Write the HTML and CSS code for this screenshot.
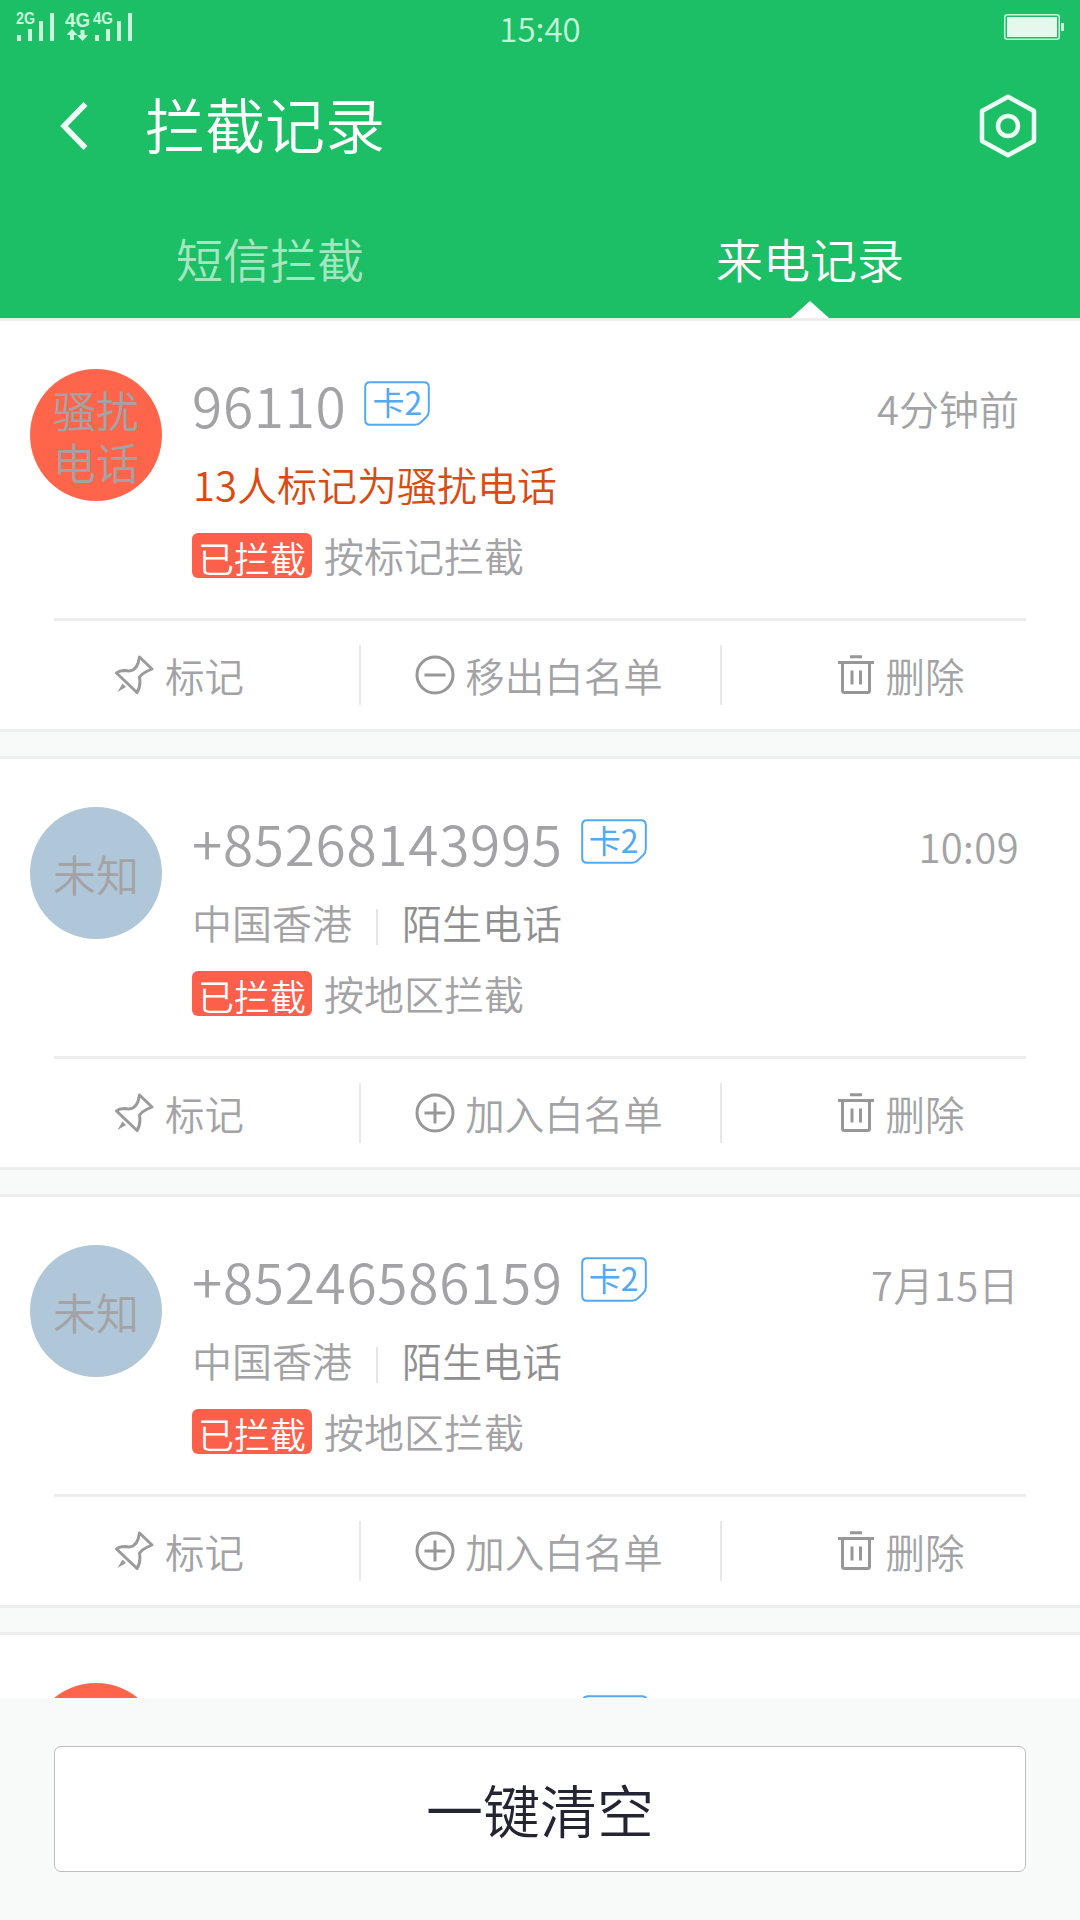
FILE: index.html
```html
<!DOCTYPE html>
<html lang="zh-CN">
<head>
<meta charset="utf-8">
<title>拦截记录</title>
<link rel="stylesheet" href="styles.css">
</head>
<body>
<svg class="defs" width="0" height="0">
  <symbol id="pin" viewBox="0 0 40 40"><path d="M24.5 2 37 14l-5.500 2.500q-5 2.500-7 5.500 1.500 10-2.500 15.500L1.500 18q2.500-2.500 8.500-2.500 5 1 8-.5 4-3 5-6.500Z" fill="none" stroke="#9b9b9b" stroke-width="3" stroke-linejoin="round"/><path d="M2.500 37 7.500 28.500 11 32Z" fill="#9b9b9b"/></symbol>
  <symbol id="minus" viewBox="0 0 40 40"><g fill="none" stroke="#979797" stroke-width="3"><circle cx="20" cy="20" r="18"/><path d="M9.500 20h21"/></g></symbol>
  <symbol id="plus" viewBox="0 0 40 40"><g fill="none" stroke="#979797" stroke-width="3"><circle cx="20" cy="20" r="18"/><path d="M9.500 20h21M20 9.500v21"/></g></symbol>
  <symbol id="trash" viewBox="0 0 36 40"><g fill="none" stroke="#979797" stroke-width="3"><path d="M12 1.700h12M0 7.500h36M4.500 7.500v28q0 2 2 2h23q2 0 2-2v-28M14 15.500v14M22.500 15.500v14"/></g></symbol>
  <symbol id="sim" viewBox="0 0 66 45"><path d="M6 1.200h54q4.800 0 4.800 4.800v24q0 3.500-2.500 6l-5.300 5.300q-2.500 2.500-6 2.500H6q-4.800 0-4.800-4.800V6q0-4.800 4.800-4.800Z" fill="#fff" stroke="#55a9f0" stroke-width="2"/></symbol>
</svg>
<div class="screen">
  <header class="header">
    <div class="status">
      <svg class="signal" width="120" height="32" viewBox="0 0 120 32" fill="#c8f7dc">
        <g class="net"><text x="0" y="14" font-size="16" textLength="19" lengthAdjust="spacingAndGlyphs">2G</text><text x="49" y="17" font-size="20" textLength="25" lengthAdjust="spacingAndGlyphs">4G</text><text x="77" y="14" font-size="16" textLength="20" lengthAdjust="spacingAndGlyphs">4G</text></g>
        <path d="M1 25h4v6H1zM12 19h4v12h-4zM23 11h4v20h-4zM34 3h4v28h-4zM79 25h4v6h-4zM90 19h4v12h-4zM101 11h4v20h-4zM112 3h4v28h-4z"/>
        <path d="M56 19l5.500 6H58v5h-4v-5h-3.500zM66.500 31l5.500-6h-3.500v-5h-4v5H61z"/>
      </svg>
      <span class="clock">15:40</span>
      <svg class="battery" width="60" height="26" viewBox="0 0 60 26"><rect x=".75" y=".75" width="54.500" height="24.500" rx="2.500" fill="none" stroke="#c8f7dc" stroke-width="1.500"/><path d="M3 3h50v20H3z" fill="#e6f8ed"/><path d="M57 9h3v8h-3z" fill="#c8f7dc"/></svg>
    </div>
    <div class="titlebar">
      <svg class="back" width="28" height="50" viewBox="0 0 28 50"><path d="M25.500 3 4 25l21.500 22" fill="none" stroke="#eefff5" stroke-width="5.500"/></svg>
      <h1 class="title">拦截记录</h1>
      <svg class="settings" width="58" height="64" viewBox="0 0 58 64"><g fill="none" stroke="#eefff5" stroke-width="4.500" stroke-linejoin="round"><path d="M29 2.800 55 17v30L29 61.200 3 47V17Z"/><circle cx="29" cy="32" r="10"/></g></svg>
    </div>
    <nav class="tabs">
      <span class="tab">短信拦截</span>
      <span class="tab active">来电记录</span>
    </nav>
  </header>

  <main class="list">
    <section class="card">
      <div class="record">
        <div class="avatar spam"><span>骚扰</span><span>电话</span></div>
        <div class="info">
          <div class="line1"><span class="number">96110</span><span class="sim"><svg class="simshape"><use href="#sim"/></svg><span class="simtext">卡2</span></span><span class="time">4分钟前</span></div>
          <div class="line2 warn">13人标记为骚扰电话</div>
          <div class="line3"><span class="blocked">已拦截</span><span class="reason">按标记拦截</span></div>
        </div>
      </div>
      <div class="actions">
        <span class="action"><svg class="icon"><use href="#pin"/></svg>标记</span>
        <span class="action"><svg class="icon"><use href="#minus"/></svg>移出白名单</span>
        <span class="action"><svg class="icon trash"><use href="#trash"/></svg>删除</span>
      </div>
    </section>

    <section class="card">
      <div class="record">
        <div class="avatar">未知</div>
        <div class="info">
          <div class="line1"><span class="number">+85268143995</span><span class="sim"><svg class="simshape"><use href="#sim"/></svg><span class="simtext">卡2</span></span><span class="time digits">10:09</span></div>
          <div class="line2"><span>中国香港</span><span class="kind">陌生电话</span></div>
          <div class="line3"><span class="blocked">已拦截</span><span class="reason">按地区拦截</span></div>
        </div>
      </div>
      <div class="actions">
        <span class="action"><svg class="icon"><use href="#pin"/></svg>标记</span>
        <span class="action"><svg class="icon"><use href="#plus"/></svg>加入白名单</span>
        <span class="action"><svg class="icon trash"><use href="#trash"/></svg>删除</span>
      </div>
    </section>

    <section class="card">
      <div class="record">
        <div class="avatar">未知</div>
        <div class="info">
          <div class="line1"><span class="number">+85246586159</span><span class="sim"><svg class="simshape"><use href="#sim"/></svg><span class="simtext">卡2</span></span><span class="time digits">7月15日</span></div>
          <div class="line2"><span>中国香港</span><span class="kind">陌生电话</span></div>
          <div class="line3"><span class="blocked">已拦截</span><span class="reason">按地区拦截</span></div>
        </div>
      </div>
      <div class="actions">
        <span class="action"><svg class="icon"><use href="#pin"/></svg>标记</span>
        <span class="action"><svg class="icon"><use href="#plus"/></svg>加入白名单</span>
        <span class="action"><svg class="icon trash"><use href="#trash"/></svg>删除</span>
      </div>
    </section>

    <section class="card">
      <div class="record">
        <div class="avatar spam"></div>
        <div class="info">
          <div class="line1"><span class="number blank"></span><span class="sim"><svg class="simshape"><use href="#sim"/></svg></span></div>
        </div>
      </div>
    </section>
  </main>

  <footer class="footer"><button class="clear">一键清空</button></footer>
</div>
</body>
</html>
```
FILE: styles.css
```css
* { box-sizing: border-box; }
body {
  margin: 0;
  font-family: "Noto Sans CJK SC", sans-serif;
  font-weight: 350;
  color: #a3a3a6;
}
.defs { position: absolute; }
.screen {
  width: 1080px;
  height: 1920px;
  display: flex;
  flex-direction: column;
  overflow: hidden;
  background: #f8faf9;
}
svg { display: block; flex: none; }

.header {
  flex: none;
  height: 318px;
  background: #1cbf65;
  color: #fff;
  display: flex;
  flex-direction: column;
}
.status {
  height: 58px;
  padding: 0 16px;
  display: grid;
  grid-template-columns: 1fr auto 1fr;
}
.signal { margin-top: 10px; }
.net { font-family: "Liberation Sans", sans-serif; font-weight: 700; }
.clock { font-size: 33px; line-height: 56px; color: #c4f5d9; }
.battery { justify-self: end; margin-top: 14px; }
.titlebar {
  height: 136px;
  padding: 0 43px 0 60px;
  display: flex;
  align-items: center;
}
.title {
  margin: 0 auto 0 57px;
  padding-bottom: 6px;
  font-size: 60px;
  line-height: 80px;
  font-weight: 350;
}
.tabs { flex: 1; display: flex; }
.tab {
  flex: 1;
  display: flex;
  flex-direction: column;
  align-items: center;
  justify-content: space-between;
  padding-top: 29px;
  font-size: 47px;
  line-height: 70px;
  color: #a4e6c2;
}
.tab.active { color: #fff; }
.tab.active::after {
  content: "";
  width: 38px;
  height: 17px;
  background: #fff;
  clip-path: polygon(50% 0, 100% 100%, 0 100%);
}

.list {
  height: 1380px;
  overflow: hidden;
  display: flex;
  flex-direction: column;
  gap: 24px;
}
.card {
  flex: none;
  height: 414px;
  background: #fff;
  border-top: 3px solid #ededed;
  border-bottom: 3px solid #ededed;
}
.record {
  height: 297px;
  padding: 48px 61px 0 30px;
  display: flex;
  gap: 30px;
}
.avatar {
  flex: none;
  width: 132px;
  height: 132px;
  border-radius: 50%;
  background: #b0c6d9;
  display: flex;
  flex-direction: column;
  align-items: center;
  justify-content: center;
  font-size: 43px;
  line-height: 52px;
}
.avatar.spam { background: #ff654b; }
.info { flex: 1; display: flex; flex-direction: column; }
.line1 { height: 72px; display: flex; }
.number { font-size: 55px; line-height: 70px; letter-spacing: .7px; }
.number.blank { width: 372px; }
.sim {
  position: relative;
  width: 66px;
  height: 45px;
  margin: 12px 0 0 18px;
  text-align: center;
}
.simshape { position: absolute; left: 0; top: 0; width: 66px; height: 45px; }
.simtext {
  position: relative;
  font-size: 32px;
  line-height: 40px;
  font-weight: 400;
  color: #55a9f0;
}
.time { margin-left: auto; font-size: 40px; line-height: 78px; }
.digits { letter-spacing: .4px; }
.line2 {
  height: 50px;
  margin-top: 18px;
  display: flex;
  align-items: center;
  font-size: 40px;
  line-height: 50px;
}
.warn { padding-left: 1px; color: #db4a10; }
.kind {
  margin-left: 24px;
  padding-left: 26px;
  color: #8f8f92;
  background: linear-gradient(#e6e6e6, #e6e6e6) 0 85% / 2px 36px no-repeat;
}
.line3 { margin-top: 24px; height: 45px; display: flex; align-items: center; }
.blocked {
  width: 120px;
  height: 45px;
  border-radius: 6px;
  background: #fc604a;
  color: #fff;
  font-size: 36px;
  line-height: 48px;
  text-align: center;
}
.reason { margin-left: 12px; font-size: 40px; line-height: 45px; }
.actions {
  height: 111px;
  display: grid;
  grid-template-columns: 359px 361px 360px;
  align-items: center;
  background: linear-gradient(#ededed, #ededed) 54px 0 / 972px 3px no-repeat;
  padding-top: 3px;
}
.action {
  height: 60px;
  display: flex;
  align-items: center;
  justify-content: center;
  gap: 10px;
  font-size: 39.500px;
  line-height: 60px;
}
.action + .action { border-left: 2px solid #e8e8e8; }
.action:nth-child(2) { padding-right: 3px; }
.icon { width: 40px; height: 40px; }
.icon.trash { width: 36px; margin-right: 2px; }

.footer { flex: 1; padding: 48px 54px; }
.clear {
  display: block;
  width: 972px;
  height: 126px;
  border: 1px solid #bdbdbd;
  border-radius: 7px;
  background: #fff;
  padding: 0 0 2px;
  font: 350 57px "Noto Sans CJK SC", sans-serif;
  color: #252433;
}
```
